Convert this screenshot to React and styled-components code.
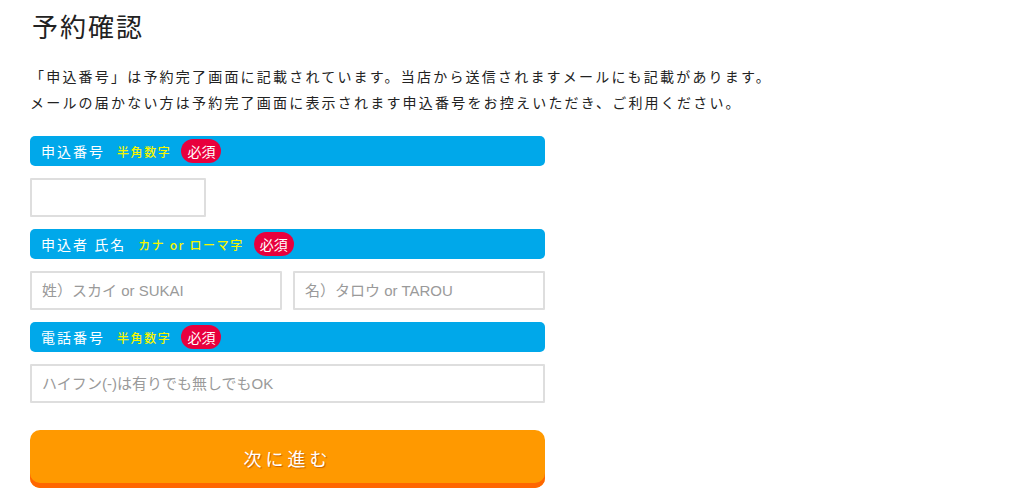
import React from 'react';
import styled, { createGlobalStyle } from 'styled-components';

const GlobalStyle = createGlobalStyle`
  body {
    margin: 0;
    background: #fff;
    font-family: "Noto Sans CJK JP", "Noto Sans", sans-serif;
    color: #222;
  }
`;

const Page = styled.div`
  width: 515px;
  padding: 9px 0 0 30px;
`;

const Title = styled.h1`
  margin: 0 0 0 2px;
  font-size: 26px;
  font-weight: 400;
  letter-spacing: 2px;
  line-height: 34px;
`;

const Lead = styled.p`
  margin: 20px 0 21px;
  font-size: 14px;
  line-height: 26px;
  letter-spacing: 2.2px;
  white-space: nowrap;
`;

const Form = styled.form`
  display: flex;
  flex-direction: column;
  gap: 12px;
`;

const Heading = styled.div`
  height: 30px;
  background: #00a8ea;
  border-radius: 5px;
  display: flex;
  align-items: center;
  padding-left: 11px;
  color: #fff;
  font-size: 14px;
  letter-spacing: 2px;
`;

const Note = styled.span`
  margin-left: 12px;
  color: #f5f500;
  font-size: 12px;
  letter-spacing: 1.6px;
  font-weight: 500;
`;

const Required = styled.span`
  margin-left: 10px;
  background: #e8003d;
  color: #fff;
  font-size: 14px;
  letter-spacing: 0;
  border-radius: 12px;
  height: 24px;
  line-height: 24px;
  padding: 0 6px;
`;

const Row = styled.div`
  display: flex;
  gap: 11px;
`;

const Input = styled.input`
  box-sizing: border-box;
  height: 39px;
  width: ${p => p.$width || '100%'};
  flex: ${p => (p.$grow ? 1 : 'none')};
  min-width: 0;
  border: 2px solid #dedede;
  border-radius: 1px;
  padding: 0 10px;
  font-family: "Liberation Sans", "Noto Sans CJK JP", sans-serif;
  font-size: 15px;
  color: #333;
  outline: none;
  &::placeholder {
    color: #9a9a9a;
  }
`;

const Submit = styled.button`
  margin-top: 15px;
  height: 58px;
  border: none;
  border-radius: 10px;
  background: #ff9900;
  box-shadow: inset 0 -5px 0 #ff6600;
  color: #fff;
  font-family: "Noto Sans CJK JP", sans-serif;
  font-size: 18px;
  letter-spacing: 4px;
  padding-bottom: 4px;
  text-shadow: 1px 1px 1px rgba(160, 60, 0, 0.6);
  cursor: pointer;
`;

function Field({ label, note }) {
  return (
    <Heading>
      {label}
      <Note>{note}</Note>
      <Required>必須</Required>
    </Heading>
  );
}

export default function App() {
  return (
    <>
      <GlobalStyle />
      <Page>
        <Title>予約確認</Title>
        <Lead>
          「申込番号」は予約完了画面に記載されています。当店から送信されますメールにも記載があります。
          <br />
          メールの届かない方は予約完了画面に表示されます申込番号をお控えいただき、ご利用ください。
        </Lead>
        <Form onSubmit={e => e.preventDefault()}>
          <Field label="申込番号" note="半角数字" />
          <Input $width="176px" />
          <Field label="申込者 氏名" note="カナ or ローマ字" />
          <Row>
            <Input $grow placeholder="姓）スカイ or SUKAI" />
            <Input $grow placeholder="名）タロウ or TAROU" />
          </Row>
          <Field label="電話番号" note="半角数字" />
          <Input placeholder="ハイフン(-)は有りでも無しでもOK" />
          <Submit type="submit">次に進む</Submit>
        </Form>
      </Page>
    </>
  );
}
